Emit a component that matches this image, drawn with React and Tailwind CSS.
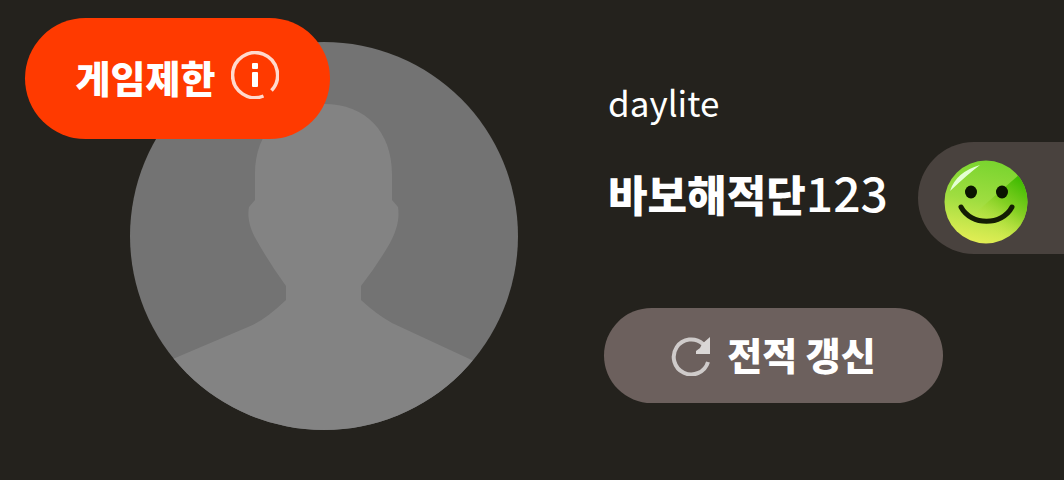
import React from 'react';

const Avatar = () => (
    <svg viewBox="0 0 388 388" className="w-full h-full" role="img" aria-label="avatar">
        <rect width="388" height="388" fill="#737373" />
        <path
            d="M194 62C236 62 262 90 262 132V158L268 165C270 178 266 190 260 201Q248 222 231 244V258Q246 272 262 281L346 320V388H38V319L118 285Q134 279 156 258V244Q140 222 127 199C120 187 117 176 119 165L125 158V132C125 90 152 62 194 62Z"
            fill="#838383"
        />
    </svg>
);

const InfoIcon = ({ className }) => (
    <svg viewBox="0 0 48 48" className={className} fill="none" aria-hidden="true">
        <path d="M32.500 45A22.500 22.500 0 1 1 40.500 39.500" stroke="#ffd9ce" strokeWidth="3.500" />
        <rect x="21" y="12" width="6" height="6" rx="1" fill="#fff" />
        <rect x="21" y="21" width="6" height="15" rx="1" fill="#fff" />
    </svg>
);

const RefreshIcon = ({ className }) => (
    <svg viewBox="0 0 40 40" className={className} fill="none" aria-hidden="true">
        <path d="M37 26A17.500 17.500 0 1 1 32 8" stroke="#cfcbca" strokeWidth="4" />
        <path d="M39 1V18H25V15L29 12L31 8Z" fill="#dad7d6" />
    </svg>
);

const SmileIcon = ({ className }) => (
    <svg viewBox="0 0 84 84" className={className} fill="none" role="img" aria-label="smile">
        <defs>
            <linearGradient id="face" x1="0.600" y1="0" x2="0.400" y2="1">
                <stop offset="0" stopColor="#78d42e" />
                <stop offset="0.500" stopColor="#9fdd40" />
                <stop offset="1" stopColor="#e4ee55" />
            </linearGradient>
            <linearGradient id="shade" gradientUnits="userSpaceOnUse" x1="76" y1="18" x2="42" y2="66">
                <stop offset="0" stopColor="#3dba00" />
                <stop offset="0.500" stopColor="#7dcc1c" stopOpacity="0.800" />
                <stop offset="1" stopColor="#c8e440" stopOpacity="0" />
            </linearGradient>
            <clipPath id="round">
                <circle cx="42" cy="42" r="41.500" />
            </clipPath>
        </defs>
        <g clipPath="url(#round)">
            <rect width="84" height="84" fill="url(#face)" />
            <path d="M84 7L30 54V84H84Z" fill="url(#shade)" />
            <path d="M6 31Q12 12 36 5Q24 14 6 31Z" fill="#e4ffd4" />
        </g>
        <ellipse cx="27" cy="32" rx="6" ry="6.500" fill="#0a1400" />
        <ellipse cx="58" cy="32" rx="6" ry="6.500" fill="#0a1400" />
        <path d="M17 47C27 66 58 66 68 47" stroke="#141c04" strokeWidth="5" strokeLinecap="round" />
    </svg>
);

const Profile = ({ user }) => (
    <section className="flex items-start pl-[130px] pt-[42px]">
        <div className="relative shrink-0">
            <div className="w-[388px] h-[388px] rounded-full overflow-hidden">
                <Avatar />
            </div>
            <button
                type="button"
                className="absolute -left-[105px] -top-6 w-[305px] h-[121px] rounded-full bg-[#ff3a00] flex items-center justify-center gap-4 pb-1 whitespace-nowrap text-[38px] leading-[48px] font-black"
            >
                {user.badge}
                <InfoIcon className="w-12 h-12 shrink-0 mb-1" />
            </button>
        </div>

        <div className="flex-1 min-w-0 ml-[86px] pt-9">
            <p className="pl-1 text-[35px] leading-[48px]">{user.id}</p>
            <div className="flex items-center mt-4">
                <h1 className="pl-1 pb-3 flex items-baseline whitespace-nowrap text-[43px] leading-[56px] font-black">
                    {user.name}
                    <span className="text-[48px] font-medium">{user.number}</span>
                </h1>
                <div className="flex-1 ml-[30px] h-[112px] rounded-l-full bg-[#49423e] flex items-center pl-[26px] pt-2">
                    <SmileIcon className="w-[84px] h-[84px] shrink-0" />
                </div>
            </div>
            <button
                type="button"
                className="mt-[54px] w-[339px] h-[95px] rounded-full bg-[#6c605d] flex items-center justify-center gap-4 whitespace-nowrap text-[38px] leading-[48px] font-black"
            >
                <RefreshIcon className="w-10 h-10 shrink-0" />
                <span className="pb-1">{user.action}</span>
            </button>
        </div>
    </section>
);

const App = () => {
    const user = { badge: '게임제한', id: 'daylite', name: '바보해적단', number: '123', action: '전적 갱신' };

    return (
        <main className="min-h-screen overflow-hidden bg-[#24221d] text-white font-['Noto_Sans_CJK_KR',sans-serif]">
            <Profile user={user} />
        </main>
    );
};

export default App;
